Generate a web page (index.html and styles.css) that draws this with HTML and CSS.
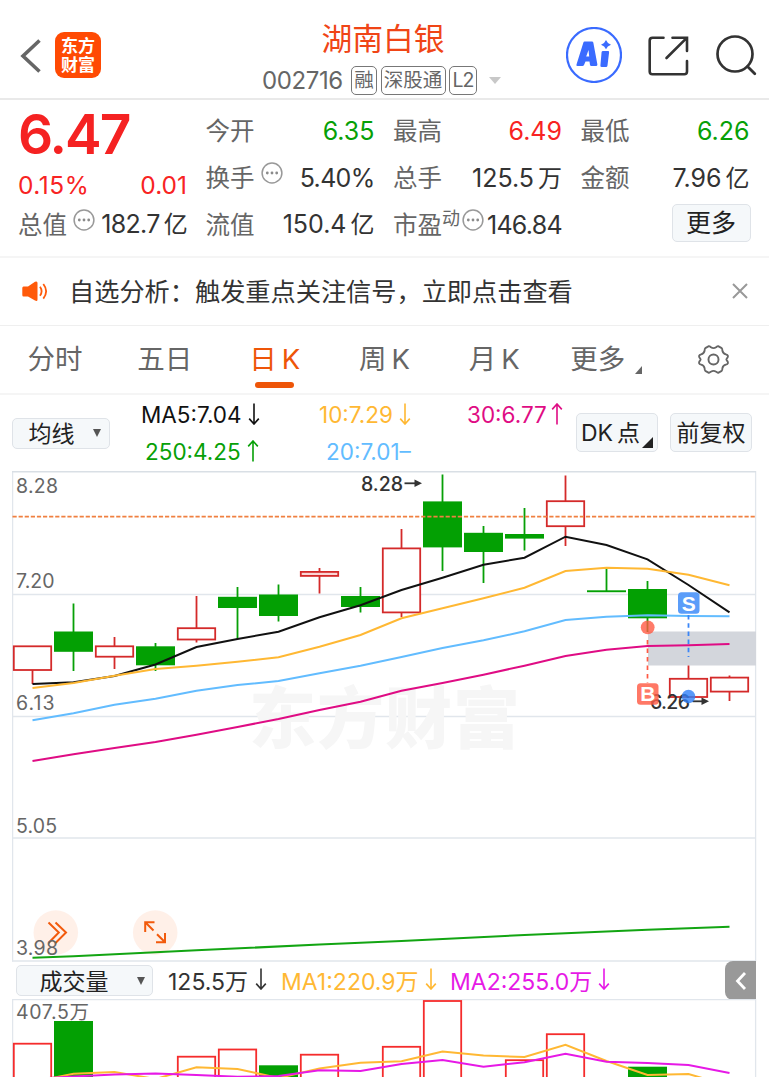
FILE: index.html
```html
<!DOCTYPE html>
<html lang="zh-CN">
<head>
<meta charset="utf-8">
<title>湖南白银 002716</title>
<link rel="stylesheet" href="styles.css">
</head>
<body>
<svg class="defs" width="0" height="0">
  <symbol id="down" viewBox="0 0 12 22"><path d="M6 0.5V21M1.2 15.6L6 21L10.8 15.6" fill="none" stroke="currentColor" stroke-width="1.6"/></symbol>
  <symbol id="up" viewBox="0 0 12 22"><path d="M6 21.5V1M1.2 6.4L6 1L10.8 6.4" fill="none" stroke="currentColor" stroke-width="1.6"/></symbol>
  <symbol id="info" viewBox="0 0 22 22"><circle cx="11" cy="11" r="9.9" fill="none" stroke="#999" stroke-width="1.5"/><g fill="#8a8a8a"><circle cx="6.3" cy="11" r="1.4"/><circle cx="11" cy="11" r="1.4"/><circle cx="15.7" cy="11" r="1.4"/></g></symbol>
</svg>
<header class="top">
  <div class="top-left">
    <svg class="back" width="22" height="36" viewBox="0 0 22 36"><path d="M19.5 2.5L3 18L19.5 33.5" fill="none" stroke="#666" stroke-width="3.6"/></svg>
    <div class="logo"><span>东方</span><span>财富</span></div>
  </div>
  <div class="top-mid">
    <h1 class="name">湖南白银</h1>
    <div class="code-row"><span class="code">002716</span><span class="chip chip-a">融</span><span class="chip chip-b">深股通</span><span class="chip chip-c">L2</span><i class="caret"></i></div>
  </div>
  <div class="top-right">
    <svg class="ai" width="56" height="56" viewBox="0 0 56 56"><circle cx="28" cy="28" r="27" fill="#fff" stroke="#3a6bff" stroke-width="2.2"/><g fill="#3a6bff"><path fill-rule="evenodd" d="M18.5 14.5H26Q27 14.5 27.3 15.5L31.4 37.5Q31.4 39 30 39H25.3Q24.3 39 24 38L23.5 34.5H19.5L18 38Q17.5 39 16.5 39H11.5Q10 39 10.5 37.5L17.4 15.5Q17.7 14.5 18.5 14.5ZM22.5 23L20.2 29.5H23.2Z"/><path d="M37 24H42Q43.3 24 43.1 25.3L41.5 38.5Q41.3 40 40 40H35.8Q34.2 40 34.4 38.5L35.6 25Q35.8 24 37 24Z"/><path d="M40 13Q41.2 16.3 45 17.7Q41.2 19 40 22.3Q38.8 19 35 17.7Q38.8 16.3 40 13Z"/></g></svg>
    <svg class="share" width="41" height="40" viewBox="0 0 41 40"><path d="M15.5 1.7H4.5Q1.7 1.7 1.7 4.5V35.5Q1.7 38.3 4.5 38.3H36.2Q39 38.3 39 35.5V25M24.5 1.7H39V15M38.5 2.2L18.5 22" fill="none" stroke="#333" stroke-width="2.6" stroke-linecap="round"/></svg>
    <svg class="search" width="42" height="42" viewBox="0 0 42 42"><circle cx="19" cy="19" r="17.5" fill="none" stroke="#333" stroke-width="2.7"/><path d="M31.5 31.5L38.8 38.8" stroke="#333" stroke-width="2.8" stroke-linecap="round"/></svg>
  </div>
</header>

<section class="quote">
  <div class="col first">
    <div class="price">6.47</div>
    <div class="row chg red"><span class="pct">0.15%</span><span>0.01</span></div>
    <div class="row"><label>总值<svg class="inf"><use href="#info"/></svg></label><b class="t">182.7<em>亿</em></b></div>
  </div>
  <div class="col">
    <div class="row"><label>今开</label><b class="green">6.35</b></div>
    <div class="row"><label>换手<svg class="inf"><use href="#info"/></svg></label><b class="t">5.40%</b></div>
    <div class="row"><label>流值</label><b>150.4<em>亿</em></b></div>
  </div>
  <div class="col">
    <div class="row"><label>最高</label><b class="red">6.49</b></div>
    <div class="row"><label>总手</label><b>125.5<em>万</em></b></div>
    <div class="row"><label>市盈<sup>动</sup><svg class="inf tight"><use href="#info"/></svg></label><b class="t">146.84</b></div>
  </div>
  <div class="col">
    <div class="row"><label>最低</label><b class="green">6.26</b></div>
    <div class="row"><label>金额</label><b>7.96<em>亿</em></b></div>
    <div class="row end"><button class="btn more">更多</button></div>
  </div>
</section>

<section class="notice">
  <svg class="horn" width="27" height="21" viewBox="0 0 27 21"><path d="M1.5 5.5H6L13 0.8Q15.5 -0.3 15.5 2V18.5Q15.5 20.8 13 19.6L6 15.5H1.5Q0.3 15.5 0.3 14V7Q0.3 5.5 1.5 5.5Z" fill="#ff5a0a"/><path d="M18 5.8Q21.2 10.3 18 14.8M21.3 3Q27 10.3 21.3 17.6" fill="none" stroke="#ff5a0a" stroke-width="1.8"/></svg>
  <p class="notice-text">自选分析：触发重点关注信号，立即点击查看</p>
  <svg class="close" width="16" height="16" viewBox="0 0 16 16"><path d="M1 1L15 15M15 1L1 15" stroke="#999" stroke-width="2"/></svg>
</section>

<nav class="tabs">
  <span>分时</span><span>五日</span><span class="on">日<i>K</i></span><span>周<i>K</i></span><span>月<i>K</i></span><span class="tab-more">更多<i class="corner"></i></span>
  <span><svg class="gear" width="31" height="29" viewBox="0 0 32 30"><path d="M11.2 1.2Q12.6 1.6 13.3 2.4Q16 4 18.7 2.4Q19.4 1.6 20.8 1.2L24.5 3.2Q25.2 3.8 25.2 6Q25.8 9 28.8 9.6Q30.6 10 31 11.4Q31 13 29.6 14.2Q29 15 29.6 15.8Q31 17 31 18.6Q30.6 20 28.8 20.4Q25.8 21 25.2 24Q25.2 26.2 24.5 26.8L20.8 28.8Q19.4 28.4 18.7 27.6Q16 26 13.3 27.6Q12.6 28.4 11.2 28.8L7.5 26.8Q6.8 26.2 6.8 24Q6.2 21 3.2 20.4Q1.4 20 1 18.6Q1 17 2.4 15.8Q3 15 2.4 14.2Q1 13 1 11.4Q1.4 10 3.2 9.6Q6.2 9 6.8 6Q6.8 3.8 7.5 3.2Z" fill="none" stroke="#666" stroke-width="1.9" stroke-linejoin="round"/><circle cx="16" cy="15" r="5.2" fill="none" stroke="#666" stroke-width="2"/></svg></span>
</nav>

<section class="mabar">
  <button class="btn sel">均线<i class="tri"></i></button>
  <div class="mas">
    <span class="m5">MA5:7.04<svg class="arw"><use href="#down"/></svg></span>
    <span class="m10">10:7.29<svg class="arw"><use href="#down"/></svg></span>
    <span class="m30">30:6.77<svg class="arw"><use href="#up"/></svg></span>
    <span class="m250">250:4.25<svg class="arw"><use href="#up"/></svg></span>
    <span class="m20">20:7.01–</span>
  </div>
  <button class="btn dk"><span>DK<em>点</em></span><i class="corner dark"></i></button>
  <button class="btn fq">前复权</button>
</section>

<svg class="chart" width="745" height="491" viewBox="12 471 745 491">
  <g class="grid"><path d="M12 594.5H756M12 716.5H756M12 838H756M12 961H756"/><path d="M12.6 471V961.5M755.6 471V961.5"/><path class="edge" d="M12 471.6H756"/></g>
  <text class="mark" x="249" y="743" textLength="271">东方财富</text>
  <rect x="648" y="631.5" width="108" height="34" fill="#d3d6dc"/>
  <g class="axis">
    <text x="16" y="492.5" textLength="42">8.28</text>
    <text x="16" y="587.5" textLength="38.5">7.20</text>
    <text x="16" y="710" textLength="38.5">6.13</text>
    <text x="16" y="832.5" textLength="41">5.05</text>
  </g>
  <g class="up">
    <path d="M32.5 670V684M114.5 637V646M114.5 656.5V669M196.5 596V628M196.5 639.5V642.5M319.5 568V572M319.5 576V593.5M401.5 529V548.5M401.5 612.5V617M565.5 475.5V501M565.5 526V546M688.5 665.5V678.5M729.5 675.5V677.5M729.5 691.5V701"/>
    <rect x="13.8" y="646.3" width="37.4" height="23.7"/><rect x="95.8" y="646.3" width="37.4" height="10.4"/><rect x="177.8" y="628.2" width="37.4" height="11.3"/><rect x="300.8" y="571.9" width="37.4" height="4" class="thin"/><rect x="382.8" y="548.4" width="37.4" height="64"/><rect x="546.8" y="501.2" width="37.4" height="25"/><rect x="669.8" y="678.8" width="37.4" height="18.2"/><rect x="710.8" y="677.6" width="37.4" height="14"/>
  </g>
  <g class="down">
    <path d="M73.5 603.5V671M155.5 643V671M237.5 587V639M278.5 584.5V621.5M360.5 587V612.5M442.5 474.5V571M483.5 526V583M524.5 508V550.5M606.5 568V591M647.5 581V632"/>
    <rect x="54" y="631.5" width="39" height="20.3"/><rect x="136" y="646.3" width="39" height="19"/><rect x="218" y="596.8" width="39" height="11.2"/><rect x="259" y="594.5" width="39" height="21.5"/><rect x="341" y="596" width="39" height="11"/><rect x="423" y="501.4" width="39" height="46"/><rect x="464" y="532.8" width="39" height="19.2"/><rect x="505" y="534" width="39" height="4.6"/><rect x="587" y="590.3" width="39" height="1.9"/><rect x="628" y="589" width="39" height="29.3"/>
  </g>
  <path d="M12.5 516.7H755" stroke="#f08040" stroke-width="1.8" stroke-dasharray="4.2 1.9"/>
  <g class="lines">
    <polyline stroke="#111" points="32.5,684 73.5,682.3 114.5,676 155.5,664.5 196.5,647 237.5,639 278.5,631.7 319.5,617.3 360.5,605.3 401.5,590 442.5,577.7 483.5,564.7 524.5,557.7 565.5,536.7 606.5,545 647.5,559.3 688.5,585 729.5,612.3"/>
    <polyline stroke="#ffb833" points="32.5,688 73.5,683 114.5,675.7 155.5,669 196.5,665.7 237.5,661.7 278.5,657.3 319.5,646.7 360.5,635 401.5,618.3 442.5,608.3 483.5,598.3 524.5,587.7 565.5,571 606.5,567.7 647.5,568.7 688.5,574.7 729.5,585.3"/>
    <polyline stroke="#62bcff" points="32.5,720.3 73.5,713.3 114.5,704.7 155.5,698.7 196.5,690.7 237.5,685 278.5,681 319.5,673.3 360.5,665.7 401.5,657 442.5,648 483.5,640.3 524.5,631.3 565.5,620 606.5,616.7 647.5,615.3 688.5,616 729.5,616.3"/>
    <polyline stroke="#df0c84" points="32.5,761 73.5,754.3 114.5,748 155.5,742 196.5,734.7 237.5,727 278.5,719 319.5,710 360.5,701.7 401.5,690.7 442.5,683 483.5,674.7 524.5,665.7 565.5,656 606.5,649.7 647.5,646 688.5,645.3 729.5,644"/>
  </g>
  <g fill="#ff5500" fill-opacity=".09"><circle cx="55.8" cy="932.5" r="22.3"/><circle cx="155.2" cy="932.5" r="22.3"/></g>
  <g fill="none" stroke="#f25a0c" stroke-width="2"><path d="M48.5 922.5L58.8 932.5L48.5 943M55.5 922.5L66 932.5L55.5 943"/><path d="M145.2 932V922.2H154.5M145.5 922.5L153.5 930.5M165 933V942.2H156M164.8 942L157 934.2"/></g>
  <g class="axis"><text x="16" y="955" textLength="42">3.98</text></g>
  <polyline class="slow" points="32.5,957.8 73.5,956.2 196.5,950.3 319.5,944.5 401.5,941 524.5,935 647.5,929.8 729.5,926.8"/>
  <g class="peak"><text x="361" y="490.5" textLength="42">8.28</text><path d="M404.5 483.3H416"/><path class="head" d="M414.5 479.6L422 483.3L414.5 487Z"/></g>
  <g class="peak"><text x="650" y="708.8" textLength="40">6.26</text><path d="M692.5 701.3H703"/><path class="head" d="M701.5 697.6L709 701.3L701.5 705Z"/></g>
  <rect x="637" y="683.3" width="21.5" height="21.5" rx="3.5" fill="#ff5a44" fill-opacity=".82"/>
  <path d="M647.5 640V683" stroke="#ff5a44" stroke-width="1.7" stroke-dasharray="4.5 4"/>
  <path d="M688.5 615V657" stroke="#3b86f7" stroke-width="1.8" stroke-dasharray="4.5 3.7"/>
  <circle cx="647.7" cy="627.3" r="6.9" fill="#ff5a44" fill-opacity=".8"/>
  <circle cx="688.5" cy="696.5" r="6.8" fill="#2f7ff8" fill-opacity=".8"/>
  <rect x="678" y="592.3" width="21.5" height="21.5" rx="3.5" fill="#5b9df9"/>
  <text class="tag" x="688.8" y="610.6">S</text><text class="tag" x="647.8" y="701.3">B</text>
</svg>

<section class="volbar">
  <button class="btn vol">成交量<i class="tri"></i></button>
  <span class="v0">125.5万<svg class="arw"><use href="#down"/></svg></span>
  <span class="v1">MA1:220.9万<svg class="arw"><use href="#down"/></svg></span>
  <span class="v2">MA2:255.0万<svg class="arw"><use href="#down"/></svg></span>
  <span class="side"><svg width="12" height="20" viewBox="0 0 12 20"><path d="M10 2L2.5 10L10 18" fill="none" stroke="#fff" stroke-width="2.8"/></svg></span>
</section>

<svg class="chart" width="745" height="78" viewBox="12 999 745 78">
  <g class="grid"><path d="M12 999.6H756M12.6 999V1077M755.6 999V1077"/></g>
  <g class="axis"><text x="16" y="1019.3" textLength="73">407.5万</text></g>
  <g class="vup"><rect x="13.8" y="1043.7" width="37.4" height="40"/><rect x="177.8" y="1056.7" width="37.4" height="40"/><rect x="218.8" y="1049.5" width="37.4" height="40"/><rect x="300.8" y="1054.7" width="37.4" height="40"/><rect x="382.8" y="1046.8" width="37.4" height="40"/><rect x="423.8" y="1001" width="37.4" height="90"/><rect x="505.8" y="1060.2" width="37.4" height="40"/><rect x="546.8" y="1034.2" width="37.4" height="60"/></g>
  <g class="down"><rect x="54" y="1021" width="39" height="60"/><rect x="259" y="1065.3" width="39" height="20"/><rect x="628" y="1066.7" width="39" height="20"/></g>
  <g class="lines"><polyline stroke="#ffb833" points="32.5,1082 73.5,1073.7 114.5,1072 155.5,1079 196.5,1067.3 237.5,1069 278.5,1078 319.5,1068.5 360.5,1062.7 401.5,1061.3 442.5,1051.5 483.5,1055.5 524.5,1057 565.5,1044.7 606.5,1061 647.5,1075 688.5,1074 729.5,1086"/><polyline stroke="#e619e6" points="32.5,1079 73.5,1076.5 114.5,1074.5 155.5,1073.5 196.5,1075 237.5,1076.8 278.5,1076 319.5,1070.3 360.5,1071 401.5,1064 442.5,1060 483.5,1066.7 524.5,1062.3 565.5,1053.7 606.5,1061.7 647.5,1063 688.5,1065 729.5,1073"/></g>
</svg>
</body>
</html>
```

FILE: styles.css
```css
* { box-sizing: border-box; margin: 0; padding: 0; }
body { width: 769px; height: 1077px; overflow: hidden; background: #fff; color: #333; font-family: Inter, "Noto Sans CJK SC", sans-serif; font-size: 25px; }
svg { display: block; flex: none; }
.defs { position: absolute; }
i, em, b { font-style: normal; font-weight: 400; }
button { font: inherit; color: inherit; }
.red { color: #f82323; }
.green { color: #07a007; }

.top { display: flex; height: 100px; border-bottom: 2px solid #e9e9e9; }
.top-left { display: flex; align-items: flex-start; width: 262px; padding: 32px 0 0 20px; }
.back { margin-top: 6px; }
.logo { display: flex; flex-direction: column; align-items: center; justify-content: center; width: 46px; height: 46px; margin-left: 13px; padding-bottom: 3px; border-radius: 9px; background: #ff4a03; color: #fff; font: 700 17px/19px "Noto Sans CJK SC", sans-serif; }
.top-mid { width: 242px; padding-top: 19px; }
.name { font-size: 30.8px; line-height: 40px; font-weight: 400; color: #f04516; text-align: center; }
.code-row { display: flex; align-items: center; height: 29px; margin-top: 7px; }
.code { width: 89px; font-size: 24px; letter-spacing: -.4px; color: #666; }
.chip { height: 29px; border: 1.5px solid #777; border-radius: 5px; font-size: 19.5px; line-height: 26px; color: #666; text-align: center; margin-right: 3.5px; white-space: nowrap; }
.chip-a { width: 26px; }
.chip-b { width: 65px; }
.chip-c { width: 28px; letter-spacing: -1px; }
.caret { margin-left: 8px; border: 6.5px solid transparent; border-top: 7px solid #c8c8c8; border-bottom: 0; }
.top-right { display: flex; padding-left: 62px; }
.ai { margin-top: 27px; }
.share { margin: 36px 0 0 26px; }
.search { margin: 35px 0 0 27px; }

.quote { display: grid; grid-template-columns: repeat(4, 169px); column-gap: 18.5px; height: 158px; padding: 8px 0 0 18px; border-bottom: 2px solid #f5f5f5; }
.row { display: flex; justify-content: space-between; align-items: center; height: 46.7px; white-space: nowrap; line-height: 46px; }
.row label { display: flex; color: #666; font-size: 24.5px; }
.row b { font-size: 25px; }
.row b em { margin-left: 4px; font-size: 24px; }
.row b.t { letter-spacing: -.7px; }
.inf { width: 22px; height: 22px; margin: 7px 0 0 6px; }
.inf.tight { margin-left: 2px; }
.row sup { font-size: 18px; line-height: 33px; }
.price { height: 54.4px; font-size: 55px; line-height: 52px; font-weight: 600; letter-spacing: -2px; color: #f52222; }
.chg { height: 39px; padding-top: 6px; font-size: 24.5px; }
.pct { letter-spacing: .5px; }
.first { white-space: nowrap; }
.row.end { justify-content: flex-end; }
.btn { display: flex; align-items: center; justify-content: center; padding-bottom: 2px; background: #f5f8fa; border: 1.5px solid #dfe3e8; border-radius: 5px; color: #222; white-space: nowrap; }
.more { width: 79px; height: 38px; margin: -4px -1px 0 0; padding-bottom: 0; }

.notice { display: flex; align-items: center; height: 68px; padding: 0 21px 1px 22px; border-bottom: 1px solid #efefef; }
.notice-text { margin: -3px 0 0 20px; flex: 1; font-size: 25.2px; color: #333; }

.tabs { display: grid; grid-template-columns: repeat(7, 1fr); height: 69px; border-bottom: 2px solid #f5f5f5; font-size: 27.5px; line-height: 67px; color: #666; }
.tabs span { position: relative; display: flex; align-items: center; justify-content: center; }
.tabs i { margin-left: 5px; }
.tabs .on { color: #ee5508; }
.on::after { content: ""; position: absolute; left: 35px; bottom: 5px; width: 39px; height: 6px; border-radius: 3px; background: #ee5508; }
.corner { width: 0; height: 0; border-left: 7px solid transparent; border-bottom: 8px solid #666; }
.tabs .corner { margin: 21px -4px 0 10px; }
.gear { margin: -1px 0 0 -2px; }

.mabar { display: flex; height: 76px; padding: 18.5px 0 0 12px; }
.sel { width: 98px; height: 31px; margin-top: 4px; padding-left: 7px; font-size: 23px; }
.tri { margin: 2px 0 0 18px; border: 4.5px solid transparent; border-top: 8px solid #555; border-bottom: 0; }
.mas { display: grid; grid-template-columns: 178px 148px 109px; grid-template-rows: 37px 37px; width: 435px; margin-top: -18px; padding-left: 31px; font-size: 22.5px; line-height: 37px; }
.mas span, .volbar span { display: flex; align-items: center; white-space: nowrap; }
.arw { width: 12px; height: 22px; margin: -1px 0 0 6px; }
.m5 { color: #111; }
.m10 { color: #ffb833; }
.m20 { color: #62bcff; padding-left: 7px; }
.m30 { color: #df0c84; }
.mas .m30 .arw { margin-left: 4px; }
.m250 { color: #07a007; padding-left: 4px; }
.dk { position: relative; width: 82px; height: 39px; margin: -1px 0 0 31px; padding-right: 13px; font-size: 23px; }
.dk em { margin-left: 4px; }
.corner.dark { position: absolute; right: 4px; bottom: 3px; border-left-width: 11px; border-bottom: 11px solid #222; }
.fq { width: 82px; height: 39px; margin: -1px 0 0 12px; font-size: 23px; }

.chart { margin-left: 12px; overflow: hidden; }
.grid path { fill: none; stroke: #e1e6ec; stroke-width: 1.3; }
.grid .edge { stroke: #d9dfe5; stroke-width: 1.8; }
.axis text { font-size: 19.5px; fill: #666; }
.mark { font: 900 67px "Noto Sans CJK SC", sans-serif; fill: #f6f6f6; }
.up path, .up rect { fill: none; stroke: #d42a2a; stroke-width: 1.8; }
.up rect { fill: #fff; }
.up .thin { fill: #fbd5d5; }
.down path { stroke: #07a007; stroke-width: 1.8; }
.down rect { fill: #03a003; }
.vup rect { fill: none; stroke: #f52c2c; stroke-width: 1.8; }
.lines polyline { fill: none; stroke-width: 2; }
.slow { fill: none; stroke: #12a512; stroke-width: 2.1; }
.peak text { font-size: 19.5px; font-weight: 500; fill: #333; }
.peak path { stroke: #333; stroke-width: 1.8; }
.peak .head { fill: #333; stroke: none; }
.tag { font: 700 21px "Liberation Sans", sans-serif; fill: #fff; text-anchor: middle; }

.volbar { display: flex; align-items: center; height: 37px; padding: 0 0 0 16px; font-size: 23px; }
.v0, .v1, .v2 { padding-bottom: 2px; }
.vol { width: 137px; height: 31px; padding-left: 15px; font-size: 23px; }
.vol .tri { margin-left: 28px; }
.v0 { width: 113px; margin-left: 15px; }
.v0 .arw { margin-left: 7px; }
.v1 { width: 169px; color: #ffb833; }
.v2 { width: 275px; color: #e619e6; }
.volbar .side { width: 31px; height: 39px; justify-content: center; border-radius: 8px 0 0 8px; background: #999; }
```
